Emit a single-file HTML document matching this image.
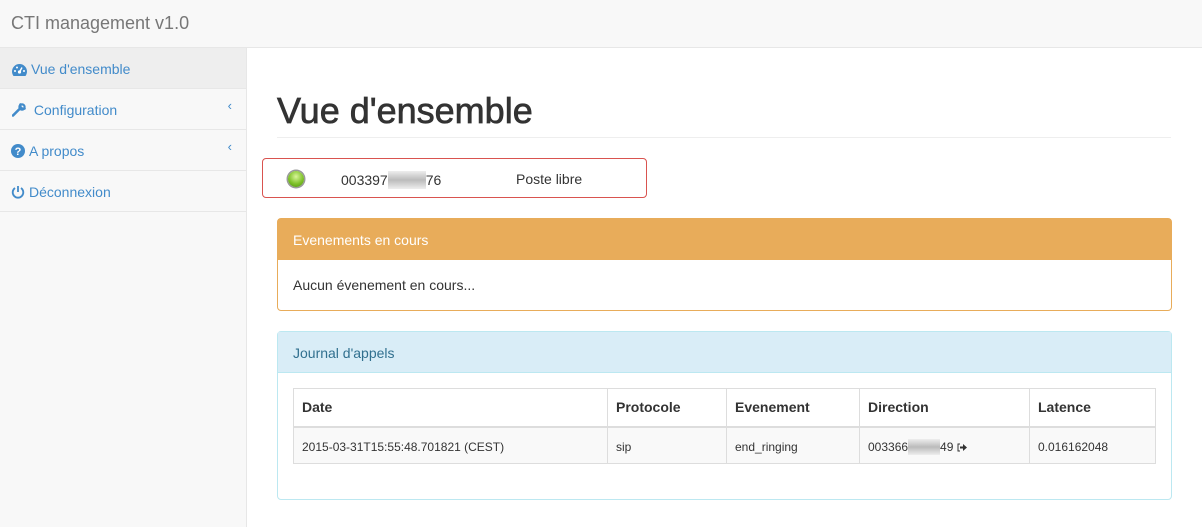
<!DOCTYPE html><html><head><meta charset="utf-8"><style>
*{box-sizing:border-box}body{margin:0;width:1202px;height:527px;overflow:hidden;font-family:"Liberation Sans",sans-serif;font-size:14px;color:#333;background:#fff;position:relative}
.nav{position:absolute;left:0;top:0;width:1202px;height:48px;background:#f8f8f8;border-bottom:1px solid #e7e7e7}
.brand{position:absolute;left:11px;top:13px;font-size:18px;color:#777}
.side{position:absolute;left:0;top:48px;width:247px;height:479px;background:#f8f8f8;border-right:1px solid #e7e7e7}
.it{height:41px;border-bottom:1px solid #e7e7e7;color:#428bca;padding:13px 0 0 12px;position:relative;font-size:14px}
.it.a{background:#eee}
.it svg{vertical-align:-2px;margin-right:4px}
.car{position:absolute;right:14px;top:9px;color:#428bca;font-size:13px}
h1{position:absolute;left:277px;top:90px;margin:0;font-size:36px;font-weight:normal;color:#333;-webkit-text-stroke:0.7px #333}
.hr{position:absolute;left:277px;top:137px;width:894px;border-top:1px solid #eee}
.st{position:absolute;left:262px;top:158px;width:385px;height:40px;border:1px solid #d9534f;border-radius:4px}
.led{position:absolute;left:25px;top:12px;width:16px;height:16px;border-radius:50%;background:radial-gradient(circle at 50% 35%,#d9f59a,#7fc22a 55%,#4b8a10);box-shadow:0 0 0 1.5px #999}
.blur{display:inline-block;width:38px;height:18px;background:linear-gradient(#eee,#bbb,#eee);vertical-align:-4px}
.p{position:absolute;left:277px;width:895px;border:1px solid;border-radius:4px}
.ph{height:41px;padding:13px 15px;border-bottom:1px solid}
table{position:absolute;left:15px;top:56px;width:863px;border-collapse:collapse}
td,th{border:1px solid #ddd;text-align:left;padding:0 8px;vertical-align:middle}
th{height:38px;border-bottom:2px solid #ddd;font-size:14px}
td{height:37px;background:#f9f9f9;font-size:12px;padding-top:3px;line-height:16px}
td .blur{height:16px;vertical-align:top}
</style></head><body>
<div class="nav"><div class="brand">CTI management v1.0</div></div>
<div class="side">
<div class="it a"><svg width="15" height="12" viewBox="0 0 15 12"><path d="M7.5 0A7.5 7.5 0 0 0 0 7.5c0 1.7.6 3.2 1.5 4.5h12c.9-1.3 1.5-2.8 1.5-4.5A7.5 7.5 0 0 0 7.5 0z" fill="#428bca"/><circle cx="7.5" cy="8" r="1.6" fill="#fff"/><path d="M7.5 8L10 3.5" stroke="#fff" stroke-width="1.4"/><circle cx="3" cy="7" r="1" fill="#fff"/><circle cx="12" cy="7" r="1" fill="#fff"/><circle cx="5" cy="3.5" r="1" fill="#fff"/></svg>Vue d'ensemble</div>
<div class="it"><svg width="14" height="14" viewBox="0 0 14 14"><path d="M1 12.5L7 6.5M8.5 1.5a3 3 0 0 0 4 4" stroke="#428bca" stroke-width="2.6" fill="none" stroke-linecap="round"/><circle cx="10" cy="4" r="2.6" fill="none" stroke="#428bca" stroke-width="2.2"/></svg> Configuration<span class="car">‹</span></div>
<div class="it" style="padding-left:11px"><svg width="14" height="14" viewBox="0 0 14 14"><circle cx="7" cy="7" r="7" fill="#428bca"/><text x="7" y="11" font-size="11" font-weight="bold" text-anchor="middle" fill="#fff" font-family="Liberation Sans">?</text></svg>A propos<span class="car">‹</span></div>
<div class="it" style="padding-left:11px"><svg width="14" height="14" viewBox="0 0 14 14"><path d="M4 3a5.3 5.3 0 1 0 6 0" stroke="#428bca" stroke-width="1.8" fill="none"/><path d="M7 1v6" stroke="#428bca" stroke-width="1.8"/></svg>Déconnexion</div>
</div>
<h1>Vue d'ensemble</h1><div class="hr"></div>
<div class="st"><div class="led"></div><span style="position:absolute;left:78px;top:12px">003397<span class="blur"></span>76</span><span style="position:absolute;left:253px;top:12px">Poste libre</span></div>
<div class="p" style="top:218px;height:93px;border-color:#e8ac5a"><div class="ph" style="background:#e8ac5a;border-color:#e8ac5a;color:#fff">Evenements en cours</div><div style="padding:17px 15px">Aucun évenement en cours...</div></div>
<div class="p" style="top:331px;height:169px;border-color:#bce8f1"><div class="ph" style="background:#d9edf7;border-color:#bce8f1;color:#31708f">Journal d'appels</div>
<table><tr><th style="width:314px">Date</th><th style="width:119px">Protocole</th><th style="width:133px">Evenement</th><th style="width:170px">Direction</th><th>Latence</th></tr>
<tr><td>2015-03-31T15:55:48.701821 (CEST)</td><td>sip</td><td>end_ringing</td><td>003366<span class="blur" style="width:32px"></span>49 <svg width="10" height="9" viewBox="0 0 10 9" style="vertical-align:-1px"><path d="M3 1H1v7h2" stroke="#333" fill="none"/><path d="M3 3.5h3V1l4 3.5-4 3.5V5.5H3z" fill="#333"/></svg></td><td>0.016162048</td></tr></table></div>
</body></html>
